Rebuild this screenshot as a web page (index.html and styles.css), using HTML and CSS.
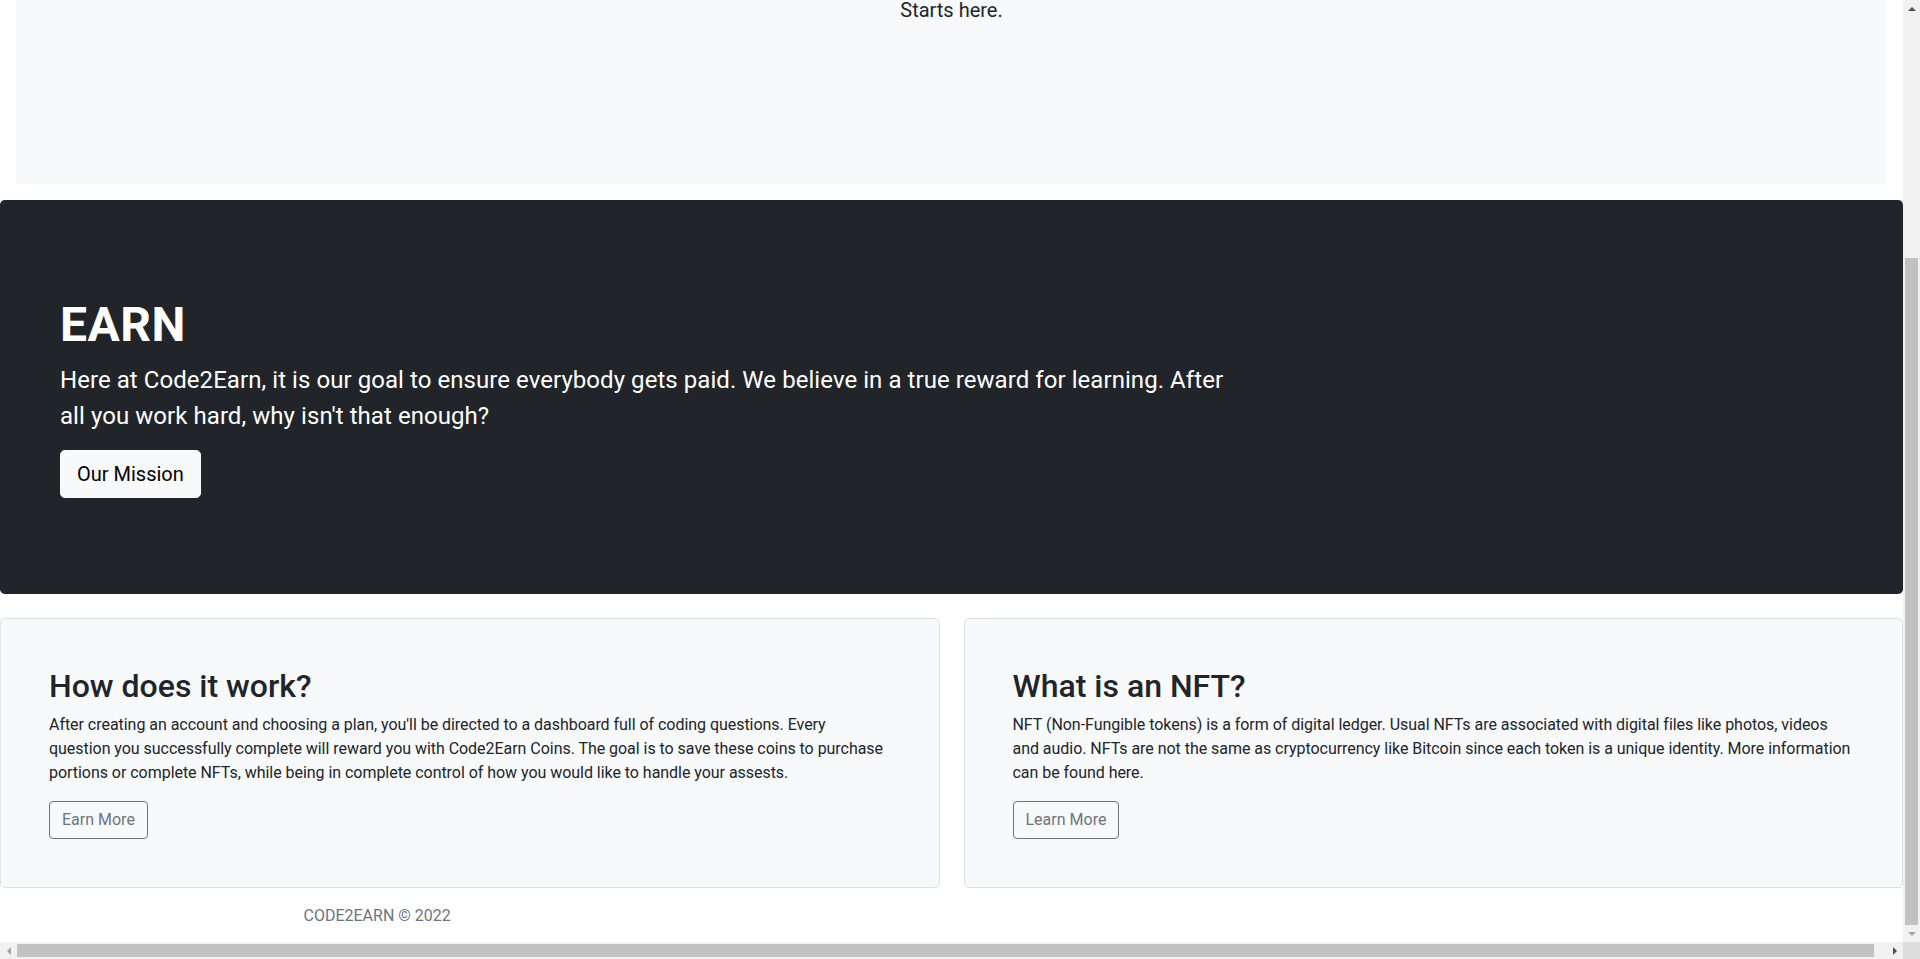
FILE: index.html
```html
<!DOCTYPE html>
<html lang="en">
<head>
<meta charset="utf-8">
<title>Code2Earn</title>
<link rel="stylesheet" href="styles.css">
</head>
<body>
<div class="window">
  <div class="viewport">
    <div class="page">
      <section class="intro">
        <p class="intro-text">Starts here.</p>
      </section>

      <section class="hero">
        <div class="hero-inner">
          <h1 class="hero-title">EARN</h1>
          <p class="hero-lead">Here at Code2Earn, it is our goal to ensure everybody gets paid. We believe in a true reward for learning. After all you work hard, why isn't that enough?</p>
          <button class="btn btn-light" type="button">Our Mission</button>
        </div>
      </section>

      <section class="cards">
        <div class="card">
          <h2 class="card-title">How does it work?</h2>
          <p class="card-text">After creating an account and choosing a plan, you'll be directed to a dashboard full of coding questions. Every question you successfully complete will reward you with Code2Earn Coins. The goal is to save these coins to purchase portions or complete NFTs, while being in complete control of how you would like to handle your assests.</p>
          <button class="btn btn-outline" type="button">Earn More</button>
        </div>
        <div class="card">
          <h2 class="card-title">What is an NFT?</h2>
          <p class="card-text">NFT (Non-Fungible tokens) is a form of digital ledger. Usual NFTs are associated with digital files like photos, videos and audio. NFTs are not the same as cryptocurrency like Bitcoin since each token is a unique identity. More information can be found here.</p>
          <button class="btn btn-outline" type="button">Learn More</button>
        </div>
      </section>

      <footer class="footer">
        <div class="container">CODE2EARN © 2022</div>
      </footer>
    </div>
  </div>

  <div class="vscroll">
    <div class="sb-btn"><span class="tri tri-up"></span></div>
    <div class="vtrack"><div class="vthumb"></div></div>
    <div class="sb-btn"><span class="tri tri-down off"></span></div>
  </div>

  <div class="hscroll">
    <div class="sb-btn"><span class="tri tri-left off"></span></div>
    <div class="htrack"><div class="hthumb"></div></div>
    <div class="sb-btn"><span class="tri tri-right"></span></div>
  </div>

  <div class="corner"></div>
</div>
</body>
</html>
```

FILE: styles.css
```css
* { box-sizing: border-box; }

html, body {
  margin: 0;
  padding: 0;
  background: #fff;
}

body {
  font-family: Roboto, "Liberation Sans", sans-serif;
  font-size: 16px;
  line-height: 1.5;
  color: #212529;
}

.window {
  width: 1920px;
  height: 959px;
  display: grid;
  grid-template-columns: 1903px 17px;
  grid-template-rows: 942px 17px;
  overflow: hidden;
}

.viewport {
  overflow: hidden;
  background: #fff;
}

.page {
  display: flex;
  flex-direction: column;
}

/* top light box */
.intro {
  height: 184px;
  margin: 0 16px 16px;
  background: #f8f9fa;
  text-align: center;
}

.intro-text {
  margin: 0;
  font-size: 20px;
  line-height: 20px;
  font-weight: 400;
}

/* dark hero */
.hero {
  background: #212529;
  color: #fff;
  border-radius: 4.8px;
  padding: 48px;
  margin-bottom: 24px;
}

.hero-inner {
  padding: 48px 12px;
}

.hero-title {
  margin: 0 0 8px;
  font-size: 48px;
  line-height: 1.2;
  font-weight: 700;
  letter-spacing: 0.5px;
}

.hero-lead {
  width: 66.6667%;
  margin: 0 0 16px;
  font-size: 24px;
  line-height: 1.5;
  letter-spacing: 0.06px;
}

/* buttons */
.btn {
  display: inline-block;
  font-family: inherit;
  font-weight: 400;
  line-height: 1.5;
  cursor: pointer;
  background: transparent;
}

.btn-light {
  font-size: 20px;
  padding: 8px 16px;
  border: 1px solid #f8f9fa;
  background: #f8f9fa;
  color: #000;
  border-radius: 4.8px;
}

.btn-outline {
  font-size: 16px;
  padding: 6px 12px;
  border: 1px solid #6c757d;
  color: #6c757d;
  border-radius: 4px;
}

/* cards */
.cards {
  display: grid;
  grid-template-columns: 1fr 1fr;
  column-gap: 24px;
}

.card {
  background: #f8f9fa;
  border: 1px solid #dee2e6;
  border-radius: 4.8px;
  padding: 48px;
}

.card-title {
  margin: 0 0 8px;
  font-size: 32px;
  line-height: 1.2;
  font-weight: 500;
}

.card-text {
  margin: 0 0 16px;
  letter-spacing: -0.04px;
}

/* footer */
.footer {
  padding: 16px 0 14px;
  color: #6c757d;
}

.container {
  width: 1320px;
  margin: 0 auto;
  padding: 0 12px;
}

/* fake scrollbars */
.vscroll {
  background: #f1f1f1;
  display: flex;
  flex-direction: column;
}

.hscroll {
  background: #f1f1f1;
  display: flex;
}

.corner {
  background: #dcdcdc;
}

.sb-btn {
  width: 17px;
  height: 17px;
  flex: 0 0 17px;
  display: flex;
  align-items: center;
  justify-content: center;
}

.vtrack {
  flex: 1;
  display: flex;
  flex-direction: column;
  justify-content: flex-end;
  padding: 0 2px;
}

.vthumb {
  height: 667px;
  background: #c1c1c1;
}

.htrack {
  flex: 1;
  display: flex;
  padding: 2px 0;
}

.hthumb {
  width: 1857px;
  background: #c1c1c1;
}

.tri {
  width: 0;
  height: 0;
  border-style: solid;
}

.tri-up {
  border-width: 0 4px 4px 4px;
  border-color: transparent transparent #505050 transparent;
}

.tri-down {
  border-width: 4px 4px 0 4px;
  border-color: #505050 transparent transparent transparent;
}

.tri-left {
  border-width: 4px 4px 4px 0;
  border-color: transparent #505050 transparent transparent;
}

.tri-right {
  border-width: 4px 0 4px 4px;
  border-color: transparent transparent transparent #505050;
}

.tri-down.off { border-top-color: #a3a3a3; }
.tri-left.off { border-right-color: #a3a3a3; }
```
